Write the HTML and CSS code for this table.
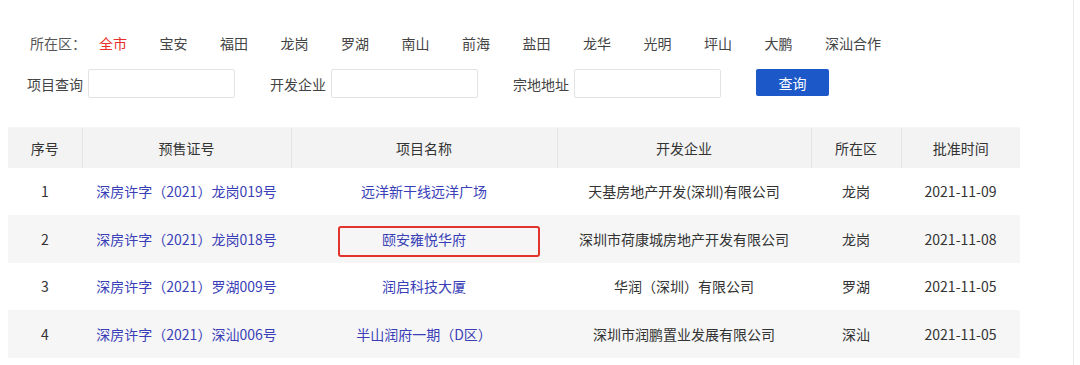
FILE: index.html
```html
<!DOCTYPE html>
<html lang="zh-CN">
<head>
<meta charset="utf-8">
<title>预售证查询</title>
<link rel="stylesheet" href="styles.css">
</head>
<body>
<div class="page">
  <div class="filters">
    <div class="district-row">
      <span class="district-label">所在区：</span>
      <ul class="district-list">
        <li class="active">全市</li>
        <li>宝安</li>
        <li>福田</li>
        <li>龙岗</li>
        <li>罗湖</li>
        <li>南山</li>
        <li>前海</li>
        <li>盐田</li>
        <li>龙华</li>
        <li>光明</li>
        <li>坪山</li>
        <li>大鹏</li>
        <li>深汕合作</li>
      </ul>
    </div>
    <div class="search-row">
      <label class="field"><span class="field-label">项目查询</span><input class="field-input" type="text"></label>
      <label class="field"><span class="field-label">开发企业</span><input class="field-input" type="text"></label>
      <label class="field"><span class="field-label">宗地地址</span><input class="field-input" type="text"></label>
      <button class="search-btn" type="button">查询</button>
    </div>
  </div>

  <table class="data-table">
    <colgroup>
      <col class="c-no"><col class="c-cert"><col class="c-name"><col class="c-dev"><col class="c-area"><col class="c-date">
    </colgroup>
    <thead>
      <tr><th>序号</th><th>预售证号</th><th>项目名称</th><th>开发企业</th><th>所在区</th><th>批准时间</th></tr>
    </thead>
    <tbody>
      <tr>
        <td>1</td>
        <td><a class="link">深房许字（2021）龙岗019号</a></td>
        <td><a class="link">远洋新干线远洋广场</a></td>
        <td>天基房地产开发(深圳)有限公司</td>
        <td>龙岗</td>
        <td>2021-11-09</td>
      </tr>
      <tr>
        <td>2</td>
        <td><a class="link">深房许字（2021）龙岗018号</a></td>
        <td class="marked"><a class="link">颐安雍悦华府</a><span class="mark-box"></span></td>
        <td>深圳市荷康城房地产开发有限公司</td>
        <td>龙岗</td>
        <td>2021-11-08</td>
      </tr>
      <tr>
        <td>3</td>
        <td><a class="link">深房许字（2021）罗湖009号</a></td>
        <td><a class="link">润启科技大厦</a></td>
        <td>华润（深圳）有限公司</td>
        <td>罗湖</td>
        <td>2021-11-05</td>
      </tr>
      <tr>
        <td>4</td>
        <td><a class="link">深房许字（2021）深汕006号</a></td>
        <td><a class="link">半山润府一期（D区）</a></td>
        <td>深圳市润鹏置业发展有限公司</td>
        <td>深汕</td>
        <td>2021-11-05</td>
      </tr>
    </tbody>
  </table>
</div>
</body>
</html>
```

FILE: styles.css
```css
* { box-sizing: border-box; }

html, body {
  margin: 0;
  padding: 0;
  background: #fff;
}

body {
  font-family: "Noto Sans CJK SC", "Noto Sans", sans-serif;
  font-size: 14px;
  color: #333;
}

.page {
  width: 1074px;
  min-height: 365px;
  border-right: 1px solid #ececec;
  padding: 33px 0 0 8px;
}

.filters {
  padding-left: 19px;
}

.district-row {
  display: flex;
  align-items: center;
  height: 20px;
  line-height: 20px;
  padding-left: 3px;
}

.district-label {
  color: #555;
  width: 69px;
}

.district-list {
  display: flex;
  list-style: none;
  margin: 0;
  padding: 0;
  gap: 32.5px;
}

.district-list li {
  color: #444;
  white-space: nowrap;
}

.district-list li.active {
  color: #e8302c;
}

.search-row {
  display: flex;
  align-items: center;
  margin-top: 16px;
  height: 29px;
}

.field {
  display: flex;
  align-items: center;
  gap: 5px;
  margin-right: 35px;
}

.field-label {
  color: #444;
  white-space: nowrap;
}

.field-input {
  width: 147px;
  height: 29px;
  border: 1px solid #e3e3e3;
  border-radius: 2px;
  background: #fff;
  margin: 0;
  padding: 0 6px;
}

.search-btn {
  width: 73px;
  height: 27px;
  margin-top: -2px;
  border: none;
  border-radius: 2px;
  background: #1c58c8;
  color: #fff;
  font-family: inherit;
  font-size: 14px;
  padding: 0;
}

.data-table {
  margin-top: 29px;
  width: 1012px;
  border-collapse: collapse;
  table-layout: fixed;
}

.c-no { width: 74px; }
.c-cert { width: 209px; }
.c-name { width: 266px; }
.c-dev { width: 254px; }
.c-area { width: 90px; }
.c-date { width: 119px; }

.data-table th {
  height: 40px;
  background: #f3f3f3;
  font-weight: normal;
  color: #333;
  border-left: 1px solid #e4e4e4;
  border-top: 1px solid #f6f6f6;
  padding: 0;
  text-align: center;
}

.data-table th:first-child {
  border-left: none;
}

.data-table td {
  height: 47.5px;
  text-align: center;
  padding: 0;
  color: #333;
  white-space: nowrap;
}

.data-table tbody tr:nth-child(even) td {
  background: #f6f6f6;
}

.link {
  color: #3a3fb8;
  text-decoration: none;
}

.marked {
  position: relative;
}

.mark-box {
  position: absolute;
  left: 47px;
  top: 11px;
  width: 202px;
  height: 31px;
  border: 2px solid #e2342d;
  border-radius: 3px;
}
```
